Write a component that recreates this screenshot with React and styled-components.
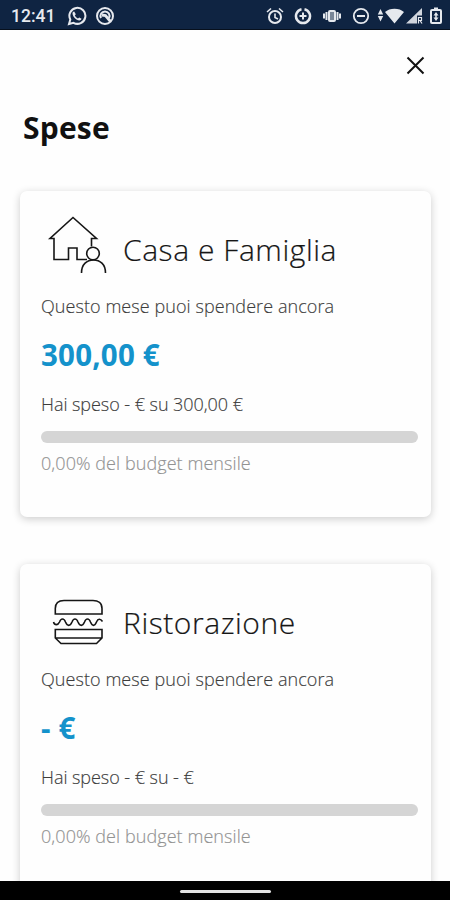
import React from "react";
import styled, { createGlobalStyle } from "styled-components";

const GlobalStyle = createGlobalStyle`
    * {
        box-sizing: border-box;
    }

    body {
        margin: 0;
        background-color: #fff;
        font-family: "Open Sans", "Noto Sans", sans-serif;
    }
`;

const Screen = styled.div`
    display: flex;
    flex-direction: column;
    width: 450px;
    height: 900px;
    overflow: hidden;
    background-color: #fefefe;
`;

const StatusBar = styled.header`
    display: flex;
    flex-shrink: 0;
    align-items: center;
    justify-content: space-between;
    height: 30px;
    padding: 2px 8px 0 11px;
    background-color: #0f2442;
    border-bottom: 1px solid #07101d;
    color: #e6e9ee;
`;

const StatusGroup = styled.div`
    display: flex;
    align-items: center;
`;

const Clock = styled.span`
    width: 47px;
    font-family: Roboto, sans-serif;
    font-size: 17.5px;
    font-weight: 500;
    line-height: 28px;
    white-space: nowrap;
`;

const StatusIcon = styled.svg`
    display: block;
    flex-shrink: 0;
    margin-left: ${(props) => props.$left || "0"};
    fill: none;
    stroke: currentColor;
    stroke-width: 2;
`;

const Content = styled.main`
    flex: 1;
    min-height: 0;
    overflow: hidden;
`;

const Toolbar = styled.div`
    display: flex;
    justify-content: flex-end;
    padding: 26px 25px 0 0;
`;

const CloseButton = styled.button`
    display: block;
    width: 19px;
    height: 19px;
    padding: 0;
    border: none;
    background: none;
    color: #111;
`;

const Title = styled.h1`
    margin: 33px 0 0 23px;
    color: #111;
    font-size: 30px;
    font-weight: 700;
    line-height: 40px;
    letter-spacing: 0.2px;
`;

const CardList = styled.div`
    display: flex;
    flex-direction: column;
    gap: 47px;
    padding: 43px 19px 0 20px;
`;

const Card = styled.section`
    display: flex;
    flex-direction: column;
    flex-shrink: 0;
    height: 326px;
    padding: 24px 13px 0 21px;
    border-radius: 7px;
    background-color: #fefefe;
    box-shadow: 0 2px 8px rgba(0, 0, 0, 0.2);
`;

const CardHeader = styled.div`
    display: flex;
    align-items: center;
    height: 70px;
`;

const CategoryIcon = styled.svg`
    flex-shrink: 0;
    width: 70px;
    height: 70px;
    margin-right: 12px;
    fill: none;
    stroke: #161616;
    stroke-width: 1.6;
`;

const CardTitle = styled.h2`
    margin: 0;
    color: #161616;
    font-size: 30px;
    font-weight: 300;
    line-height: 40px;
    letter-spacing: 0.55px;
    white-space: nowrap;
    -webkit-text-stroke: 0.2px #161616;
`;

const Text = styled.p`
    margin: ${(props) => props.$top} 0 0;
    color: ${(props) => props.$color || "#3c3c3c"};
    font-size: 18px;
    font-weight: 300;
    line-height: 26px;
    letter-spacing: ${(props) => props.$spacing || "0.07px"};
    white-space: nowrap;
    -webkit-text-stroke: 0.15px currentColor;
`;

const Amount = styled.p`
    margin: 18px 0 0;
    color: #1492cb;
    font-size: 29.5px;
    font-weight: 700;
    line-height: 36px;
    letter-spacing: 0.2px;
`;

const Track = styled.div`
    height: 12px;
    margin-top: 14px;
    overflow: hidden;
    border-radius: 6px;
    background-color: #d5d5d5;
`;

const Progress = styled.div`
    height: 100%;
    background-color: #1492cb;
`;

const NavBar = styled.footer`
    display: flex;
    flex-shrink: 0;
    align-items: center;
    justify-content: center;
    height: 19px;
    background-color: #000;
`;

const HomeHandle = styled.div`
    width: 91px;
    height: 3px;
    margin-top: 2px;
    border-radius: 2px;
    background-color: #e2e2e2;
`;

const HouseIcon = () => (
    <CategoryIcon viewBox="0 0 70 70">
        <path d="M46 44.500H36V33H27.500V44.500H13V23.500H9L32 2.500L55.500 23.500H50.500V31.500" />
        <circle cx="52" cy="38.500" r="6.300" />
        <path d="M40.500 58C40.500 49 46 45 52.500 45C59 45 64.500 49 64.500 58" />
    </CategoryIcon>
);

const BurgerIcon = () => (
    <CategoryIcon viewBox="0 0 70 70">
        <path d="M14.300 26V20.500C14.300 15 18 12.500 23 12.500H52C57 12.500 61 15 61 20.500V26Z" />
        <path d="M12.500 34C13.500 37.500 17 37.500 18.500 34C20 30 23 30 24.500 34C26.500 38.500 29 38.500 31 34C32.500 30 35.500 30 37 34C39 38.500 41.500 38.500 43.500 34C45 30 48 30 49.500 34C51.500 38.500 53.500 38.500 55.500 34C57 30.500 59.500 30.500 61.500 33.500" />
        <path d="M14.300 41.500H61V50L55.500 55.500H20L14.300 50ZM14.300 50H61" />
    </CategoryIcon>
);

const categories = [
    { name: "Casa e Famiglia", icon: HouseIcon, left: "300,00 €", spent: "- €", budget: "300,00 €", percent: 0 },
    { name: "Ristorazione", icon: BurgerIcon, left: "- €", spent: "- €", budget: "- €", percent: 0 },
];

const PhoneStatus = () => (
    <StatusBar>
        <StatusGroup>
            <Clock>12:41</Clock>
            {/* WhatsApp */}
            <StatusIcon $left="9px" width="20" height="20" viewBox="0 0 20 20">
                <path d="M2 18L3.300 13.500A8 8 0 1 1 6.500 16.800Z" />
                <path
                    d="M7.200 5.500L8.800 8.200L7.800 9.500C8.700 11 9.600 11.900 11 12.600L12.200 11.500L14.500 12.800C13.800 15.200 11.500 14.700 9.500 13.400C7.200 12 5.500 9.500 5.500 7.500C5.500 6.400 6.200 5.500 7.200 5.500Z"
                    fill="currentColor"
                    stroke="none"
                />
            </StatusIcon>
            <StatusIcon $left="8px" width="20" height="20" viewBox="0 0 20 20">
                <circle cx="10" cy="10" r="8" />
                <path d="M6 12A4.500 4.500 0 1 1 14 12" />
                <path d="M7 9L10.500 9.500L15.500 15.500" strokeWidth="2.800" />
            </StatusIcon>
        </StatusGroup>
        <StatusGroup>
            {/* alarm */}
            <StatusIcon width="18" height="18" viewBox="0 0 18 18">
                <circle cx="9" cy="10" r="6" />
                <path d="M1 5L5 1.500M17 5L13 1.500M9 6.500V10.500L12 12" strokeWidth="1.600" />
            </StatusIcon>
            {/* data saver */}
            <StatusIcon $left="10px" width="18" height="18" viewBox="0 0 18 18">
                <path d="M10.500 2.200A7 7 0 1 1 7.500 2.200" strokeWidth="2.500" />
                <path d="M9 5.500V12.500M5.500 9H12.500" />
            </StatusIcon>
            {/* vibration */}
            <StatusIcon $left="10px" width="20" height="18" viewBox="0 0 20 18">
                <path d="M2 6.500V11.500M4.500 5V13M15.500 5V13M18 6.500V11.500" />
                <rect x="7" y="4" width="6" height="10" rx="1" fill="currentColor" fillOpacity=".5" />
            </StatusIcon>
            {/* do not disturb */}
            <StatusIcon $left="10px" width="18" height="18" viewBox="0 0 18 18">
                <circle cx="9" cy="9" r="7.200" strokeWidth="1.800" />
                <path d="M5 9H13" />
            </StatusIcon>
            {/* wifi with activity arrows */}
            <StatusIcon $left="7px" width="28" height="18" viewBox="0 0 28 18">
                <path
                    d="M3.500 2L6.200 7.500H0.800ZM0.800 9H6.200L3.500 14.500ZM8 5C12.500 .5 22.500 .5 27 5L17.500 16.500Z"
                    fill="currentColor"
                    stroke="none"
                />
            </StatusIcon>
            {/* mobile signal */}
            <StatusIcon $left="1px" width="17" height="18" viewBox="0 0 17 18">
                <path d="M0 16.500L16 1V8.500H11V16.500Z" fill="currentColor" stroke="none" opacity=".9" />
                <path d="M12.500 16.500V10.500H15.500V13.500H12.500M14 13.500L16 16.500" strokeWidth="1.200" />
            </StatusIcon>
            {/* battery saver */}
            <StatusIcon $left="7px" width="12" height="18" viewBox="0 0 12 18">
                <path d="M4 1.500H8" />
                <rect x="1" y="3" width="10" height="13" rx="1" />
                <path d="M6 5L8.500 8.500H3.500ZM3.500 10.500H8.500L6 14Z" fill="currentColor" stroke="none" />
                <path d="M6 7V12" strokeWidth="1.500" />
            </StatusIcon>
        </StatusGroup>
    </StatusBar>
);

const BudgetCard = ({ category }) => {
    const Icon = category.icon;

    return (
        <Card>
            <CardHeader>
                <Icon />
                <CardTitle>{category.name}</CardTitle>
            </CardHeader>
            <Text $top="8px">Questo mese puoi spendere ancora</Text>
            <Amount>{category.left}</Amount>
            <Text $top="18px" $spacing="-0.05px">
                Hai speso {category.spent} su {category.budget}
            </Text>
            <Track>
                <Progress style={{ width: `${category.percent}%` }} />
            </Track>
            <Text $top="7px" $color="#929292">
                {category.percent.toFixed(2).replace(".", ",")}% del budget mensile
            </Text>
        </Card>
    );
};

const App = () => {
    return (
        <Screen>
            <GlobalStyle />
            <PhoneStatus />
            <Content>
                <Toolbar>
                    <CloseButton aria-label="Chiudi">
                        <svg width="19" height="19" viewBox="0 0 19 19" stroke="currentColor" strokeWidth="2">
                            <path d="M1.500 1.500L17.500 17.500M17.500 1.500L1.500 17.500" />
                        </svg>
                    </CloseButton>
                </Toolbar>
                <Title>Spese</Title>
                <CardList>
                    {categories.map((category) => (
                        <BudgetCard key={category.name} category={category} />
                    ))}
                </CardList>
            </Content>
            <NavBar>
                <HomeHandle />
            </NavBar>
        </Screen>
    );
};

export default App;
